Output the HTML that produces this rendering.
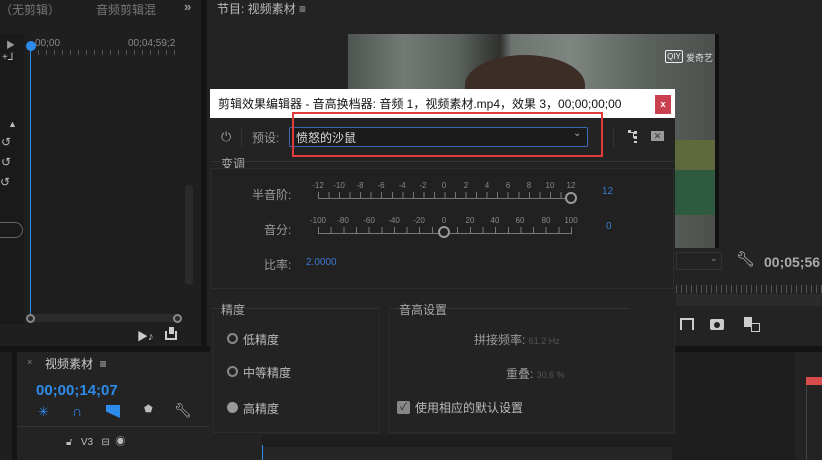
<!DOCTYPE html>
<html><head><meta charset="utf-8"><style>
*{margin:0;padding:0;box-sizing:border-box}
body{width:822px;height:460px;overflow:hidden;background:#141414;font-family:"Liberation Sans","Noto Sans CJK SC",sans-serif;position:relative;color:#aaa;font-size:12px}
.a{position:absolute}
.t{position:absolute;white-space:nowrap}
.l{position:absolute;white-space:nowrap;color:#888;font-size:8px;width:30px;text-align:center;margin-left:-15px}
</style></head><body>
<!-- left top panel -->
<div class="a" style="left:0;top:0;width:201px;height:346px;background:#1f1f1f"></div>
<div class="t" style="left:0;top:1px;color:#777;font-size:12px">（无剪辑）</div>
<div class="t" style="left:96px;top:1px;color:#777;font-size:12px">音频剪辑混</div>
<div class="t" style="left:184px;top:-1px;color:#999;font-weight:bold;font-size:13px">»</div>
<div class="a" style="left:0;top:34px;width:24px;height:290px;background:#1a1a1a"></div>
<div class="t" style="left:6px;top:38px;color:#999;font-size:9px">▶</div>
<div class="t" style="left:2px;top:52px;color:#bbb;font-size:10px">+⅃</div>
<div class="t" style="left:8px;top:119px;color:#bbb;font-size:9px">▲</div>
<div class="t" style="left:1px;top:135px;color:#bbb;font-size:12px">↺</div>
<div class="t" style="left:1px;top:155px;color:#bbb;font-size:12px">↺</div>
<div class="t" style="left:0;top:175px;color:#bbb;font-size:12px">↺</div>
<div class="a" style="left:-10px;top:222px;width:33px;height:16px;border:1px solid #666;border-radius:8px"></div>
<div class="t" style="left:35px;top:38px;color:#888;font-size:10px">00;00</div>
<div class="t" style="left:128px;top:38px;color:#888;font-size:10px">00;04;59;2</div>
<div class="a" style="left:30px;top:50px;width:150px;height:5px;background:repeating-linear-gradient(90deg,#555 0 1px,transparent 1px 8px)"></div>
<div class="a" style="left:26px;top:41px;width:10px;height:10px;border-radius:50%;background:#2d8ceb"></div>
<div class="a" style="left:30px;top:50px;width:1px;height:267px;background:#2d8ceb"></div>
<div class="a" style="left:185px;top:185px;width:8px;height:100px;background:#2b2b2b;border-radius:4px"></div>
<div class="a" style="left:27px;top:314px;width:152px;height:8px;background:#2b2b2b"></div>
<div class="a" style="left:26px;top:314px;width:9px;height:9px;border:2px solid #888;border-radius:50%"></div>
<div class="a" style="left:173px;top:314px;width:9px;height:9px;border:2px solid #888;border-radius:50%"></div>
<div class="t" style="left:137px;top:328px;color:#ccc;font-size:11px">▶♪</div>
<div class="a" style="left:165px;top:331px;width:12px;height:9px;border:2px solid #ccc;border-top:0"></div>
<div class="a" style="left:169px;top:327px;width:5px;height:7px;background:#ccc"></div>
<!-- right top panel -->
<div class="a" style="left:207px;top:0;width:615px;height:346px;background:#232323"></div>
<div class="t" style="left:217px;top:0;color:#bbb;font-size:12px">节目: 视频素材 ≡</div>
<div class="a" style="left:348px;top:34px;width:371px;height:214px;background:linear-gradient(90deg,#4e5450 0%,#737a76 15%,#5a615c 30%,#2f302e 41%,#6d736f 44%,#7e8480 60%,#5c625e 80%,#4a4f4b 100%)"></div>
<div class="a" style="left:465px;top:55px;width:120px;height:60px;border-radius:50% 50% 0 0;background:#3c2e27"></div>
<div class="a" style="left:672px;top:140px;width:46px;height:30px;background:#5e6a3e"></div>
<div class="a" style="left:672px;top:170px;width:46px;height:45px;background:#2e5a40"></div>
<div class="a" style="left:715px;top:34px;width:4px;height:214px;background:#111"></div>
<div class="a" style="left:665px;top:50px;width:18px;height:13px;border:1px solid #eee;border-radius:2px;color:#eee;font-size:8px;line-height:11px;text-align:center">QIY</div>
<div class="t" style="left:686px;top:51px;color:#ddd;font-size:9px">爱奇艺</div>
<div class="a" style="left:676px;top:252px;width:46px;height:18px;border:1px solid #333"></div>
<div class="t" style="left:710px;top:253px;color:#888;font-size:9px">⌄</div>
<div class="t" style="left:736px;top:250px;color:#ccc;font-size:15px">🔧︎</div>
<div class="t" style="left:764px;top:254px;color:#aaa;font-size:14px;font-weight:bold">00;05;56</div>
<div class="a" style="left:676px;top:285px;width:146px;height:8px;background:repeating-linear-gradient(90deg,#555 0 1px,transparent 1px 5px)"></div>
<div class="a" style="left:676px;top:294px;width:146px;height:12px;background:#2b2b2b"></div>
<div class="a" style="left:710px;top:319px;width:14px;height:11px;background:#ccc;border-radius:2px"></div>
<div class="a" style="left:714px;top:322px;width:6px;height:6px;border-radius:50%;background:#232323"></div>
<div class="a" style="left:744px;top:317px;width:8px;height:10px;background:#ccc"></div>
<div class="a" style="left:751px;top:323px;width:9px;height:9px;border:1px solid #ccc"></div>
<div class="a" style="left:680px;top:318px;width:14px;height:12px;border:2px solid #ccc;border-bottom:0"></div>
<!-- bottom left panel -->
<div class="a" style="left:0;top:352px;width:12px;height:108px;background:#1f1f1f"></div>
<div class="a" style="left:17px;top:352px;width:245px;height:108px;background:#232323"></div>
<div class="t" style="left:27px;top:357px;color:#888;font-size:9px">×</div>
<div class="t" style="left:45px;top:355px;color:#ccc;font-size:12px">视频素材 &nbsp;≡</div>
<div class="t" style="left:36px;top:382px;color:#2d8ceb;font-size:15px;font-weight:bold">00;00;14;07</div>
<div class="t" style="left:38px;top:404px;color:#2d8ceb;font-size:13px">✳</div>
<div class="t" style="left:72px;top:403px;color:#2d8ceb;font-size:14px;font-weight:bold">∩</div>
<div class="a" style="left:106px;top:405px;width:14px;height:13px;background:#2d8ceb;clip-path:polygon(0 0,100% 0,100% 100%,0 50%)"></div>
<div class="t" style="left:144px;top:404px;color:#bbb;font-size:10px">⬟</div>
<div class="t" style="left:174px;top:402px;color:#bbb;font-size:14px">🔧︎</div>
<div class="a" style="left:17px;top:426px;width:245px;height:1px;background:#333"></div>
<div class="t" style="left:66px;top:433px;color:#bbb;font-size:10px">🔓︎ &nbsp; V3 &nbsp; ⊟ &nbsp;◉</div>
<div class="a" style="left:262px;top:352px;width:560px;height:108px;background:#1e1e1e"></div>
<div class="a" style="left:262px;top:447px;width:410px;height:13px;background:#262626"></div>
<div class="a" style="left:262px;top:445px;width:1px;height:15px;background:#2d8ceb"></div>
<div class="a" style="left:795px;top:352px;width:27px;height:108px;background:#232323"></div>
<div class="a" style="left:806px;top:377px;width:16px;height:8px;background:#d94c4c"></div>
<div class="a" style="left:806px;top:385px;width:1px;height:75px;background:#444"></div>
<!-- dialog -->
<div class="a" style="left:210px;top:89px;width:465px;height:29px;background:#fff"></div>
<div class="t" style="left:218px;top:95px;color:#111;font-size:12px">剪辑效果编辑器 - 音高换档器: 音频 1，视频素材.mp4，效果 3，00;00;00;00</div>
<div class="a" style="left:655px;top:95px;width:16px;height:19px;background:#c9414e;color:#fff;font-size:9px;font-weight:bold;text-align:center;line-height:19px">x</div>
<div class="a" style="left:210px;top:118px;width:465px;height:317px;background:#232323"></div>
<div class="t" style="left:221px;top:129px;color:#999;font-size:13px">⏻</div>
<div class="a" style="left:241px;top:127px;width:1px;height:20px;background:#333"></div>
<div class="t" style="left:252px;top:129px;color:#999;font-size:12px">预设:</div>
<div class="a" style="left:289px;top:127px;width:299px;height:20px;border:1px solid #3d6ab2;border-radius:2px;background:#1b1b1b"></div>
<div class="t" style="left:296px;top:129px;color:#ddd;font-size:12px">愤怒的沙鼠</div>
<div class="t" style="left:573px;top:128px;color:#aaa;font-size:10px">⌄</div>
<div class="a" style="left:292px;top:112px;width:311px;height:45px;border:2px solid #e03a3a"></div>
<div class="a" style="left:613px;top:128px;width:1px;height:20px;background:#333"></div>
<div class="a" style="left:628px;top:130px;width:3px;height:3px;background:#ccc"></div>
<div class="a" style="left:631px;top:132px;width:3px;height:6px;border-top:1px solid #ccc;border-right:1px solid #ccc"></div>
<div class="a" style="left:634px;top:131px;width:3px;height:12px;background:repeating-linear-gradient(180deg,#ccc 0 3px,transparent 3px 5px)"></div>
<div class="a" style="left:651px;top:131px;width:13px;height:10px;background:#999;color:#333;font-size:9px;line-height:10px;text-align:center">✕</div>
<!-- 变调 -->
<div class="a" style="left:212px;top:161px;width:463px;height:1px;background:#333"></div>
<div class="t" style="left:221px;top:155px;color:#aaa;font-size:12px;background:#232323">变调</div>
<div class="a" style="left:211px;top:168px;width:463px;height:121px;border:1px solid #2d2d2d;background:#212121"></div>
<div class="t" style="left:252px;top:186px;color:#999;font-size:12px">半音阶:</div>
<div class="l" style="left:318px;top:181px">-12</div><div class="l" style="left:339px;top:181px">-10</div><div class="l" style="left:360px;top:181px">-8</div><div class="l" style="left:381px;top:181px">-6</div><div class="l" style="left:402px;top:181px">-4</div><div class="l" style="left:423px;top:181px">-2</div><div class="l" style="left:444px;top:181px">0</div><div class="l" style="left:466px;top:181px">2</div><div class="l" style="left:487px;top:181px">4</div><div class="l" style="left:508px;top:181px">6</div><div class="l" style="left:529px;top:181px">8</div><div class="l" style="left:550px;top:181px">10</div><div class="l" style="left:571px;top:181px">12</div>
<div class="a" style="left:318px;top:192px;width:254px;height:7px;border-bottom:1px solid #777;background:repeating-linear-gradient(90deg,#777 0 1px,transparent 1px 10.54px)"></div>
<div class="a" style="left:565px;top:192px;width:12px;height:12px;border:2px solid #999;border-radius:50%;background:#222"></div>
<div class="t" style="left:602px;top:186px;color:#3b7ad0;font-size:10px">12</div>
<div class="t" style="left:264px;top:221px;color:#999;font-size:12px">音分:</div>
<div class="l" style="left:318px;top:216px">-100</div><div class="l" style="left:343px;top:216px">-80</div><div class="l" style="left:369px;top:216px">-60</div><div class="l" style="left:394px;top:216px">-40</div><div class="l" style="left:419px;top:216px">-20</div><div class="l" style="left:444px;top:216px">0</div><div class="l" style="left:470px;top:216px">20</div><div class="l" style="left:495px;top:216px">40</div><div class="l" style="left:520px;top:216px">60</div><div class="l" style="left:546px;top:216px">80</div><div class="l" style="left:571px;top:216px">100</div>
<div class="a" style="left:318px;top:227px;width:254px;height:7px;border-bottom:1px solid #777;background:repeating-linear-gradient(90deg,#777 0 1px,transparent 1px 12.65px)"></div>
<div class="a" style="left:438px;top:226px;width:12px;height:12px;border:2px solid #999;border-radius:50%;background:#222"></div>
<div class="t" style="left:606px;top:221px;color:#3b7ad0;font-size:10px">0</div>
<div class="t" style="left:264px;top:256px;color:#999;font-size:12px">比率:</div>
<div class="t" style="left:306px;top:257px;color:#3b7ad0;font-size:10px">2.0000</div>
<!-- 精度 -->
<div class="a" style="left:212px;top:308px;width:167px;height:1px;background:#333"></div>
<div class="t" style="left:221px;top:301px;color:#aaa;font-size:12px;background:#232323">精度</div>
<div class="a" style="left:213px;top:312px;width:167px;height:121px;border:1px solid #2d2d2d;border-top:0"></div>
<div class="a" style="left:227px;top:333px;width:11px;height:11px;border:2px solid #888;border-radius:50%"></div>
<div class="t" style="left:243px;top:331px;color:#bbb;font-size:12px">低精度</div>
<div class="a" style="left:227px;top:366px;width:11px;height:11px;border:2px solid #888;border-radius:50%"></div>
<div class="t" style="left:243px;top:364px;color:#bbb;font-size:12px">中等精度</div>
<div class="a" style="left:227px;top:402px;width:11px;height:11px;border-radius:50%;background:#999"></div>
<div class="t" style="left:243px;top:400px;color:#bbb;font-size:12px">高精度</div>
<div class="a" style="left:390px;top:308px;width:240px;height:1px;background:#333"></div>
<div class="t" style="left:399px;top:301px;color:#aaa;font-size:12px;background:#232323">音高设置</div>
<div class="a" style="left:389px;top:312px;width:286px;height:121px;border:1px solid #2d2d2d;border-top:0"></div>
<div class="t" style="left:474px;top:331px;color:#999;font-size:12px">拼接频率: <span style="color:#555;font-size:9px">61.2 Hz</span></div>
<div class="t" style="left:506px;top:365px;color:#999;font-size:12px">重叠: <span style="color:#555;font-size:9px">30.6 %</span></div>
<div class="a" style="left:397px;top:401px;width:13px;height:13px;background:#888;border-radius:2px;color:#222;font-size:10px;text-align:center;line-height:13px">✓</div>
<div class="t" style="left:415px;top:399px;color:#bbb;font-size:12px">使用相应的默认设置</div>
</body></html>
